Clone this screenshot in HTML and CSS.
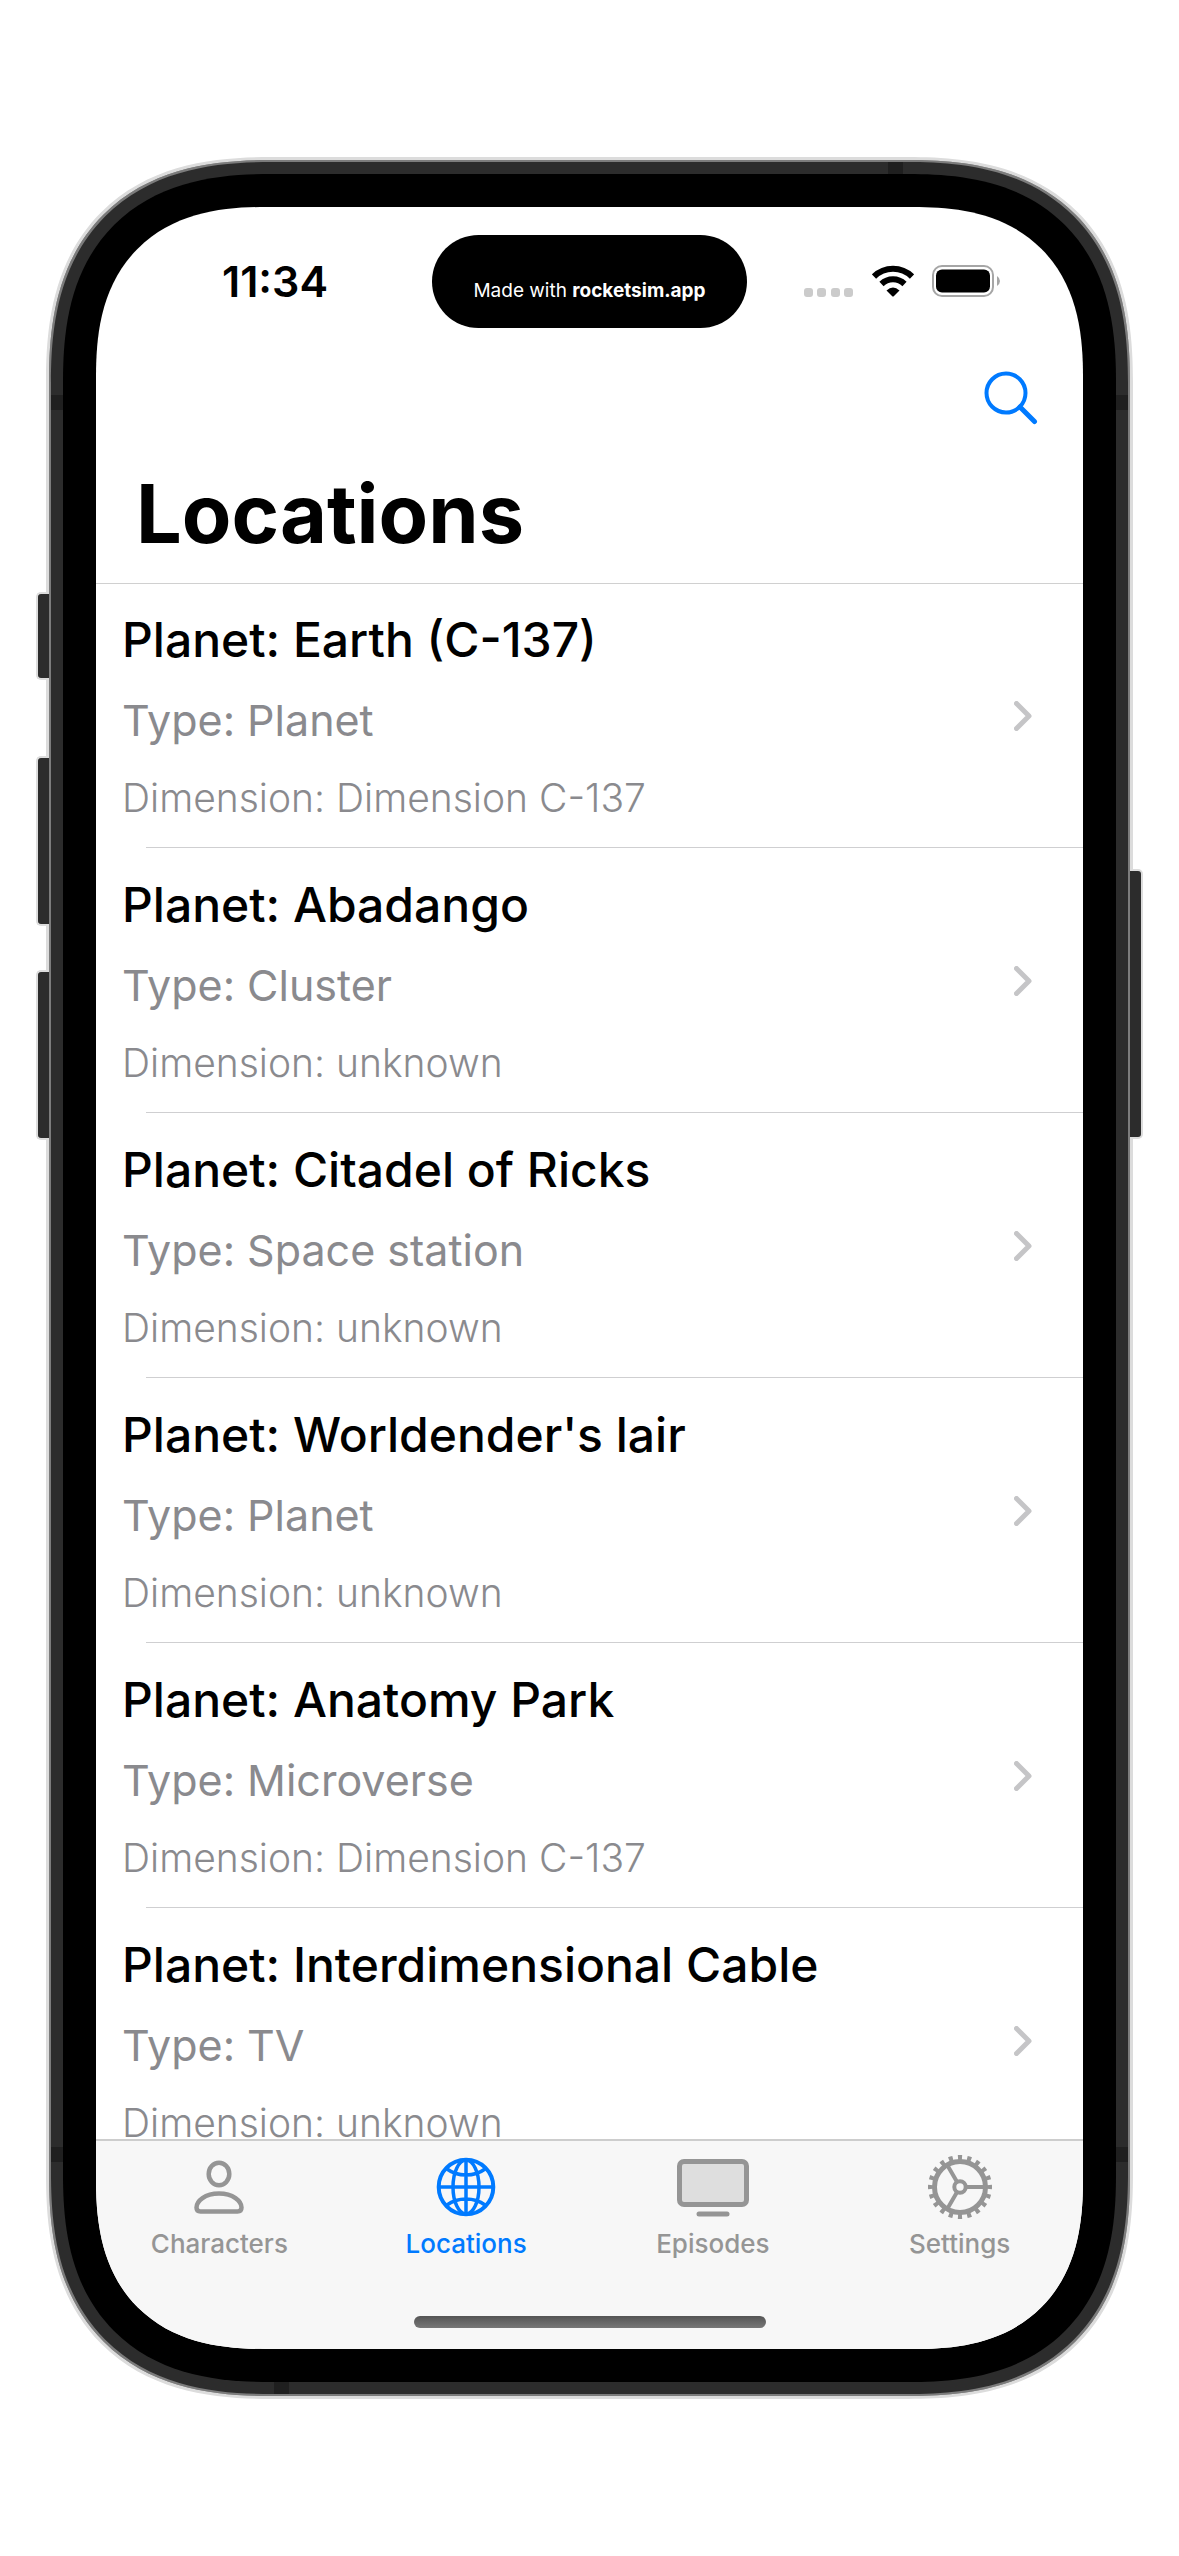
FILE: index.html
```html
<!DOCTYPE html>
<html lang="en">
<head>
<meta charset="utf-8">
<meta name="viewport" content="width=device-width, initial-scale=1">
<title>Locations</title>
<link rel="stylesheet" href="styles.css">
</head>
<body>
<div class="phone">
  <span class="key key-left key-action"></span>
  <span class="key key-left key-volume-up"></span>
  <span class="key key-left key-volume-down"></span>
  <span class="key key-power"></span>
  <span class="antenna antenna-top"></span>
  <span class="antenna antenna-bottom"></span>
  <span class="antenna antenna-side antenna-left-upper"></span>
  <span class="antenna antenna-side antenna-left-lower"></span>
  <span class="antenna antenna-side antenna-right-upper"></span>
  <span class="antenna antenna-side antenna-right-lower"></span>
  <div class="bezel">
    <div class="screen">
      <div class="status">
        <time class="clock">11:34</time>
        <div class="island"><span>Made with <b>rocketsim.app</b></span></div>
        <div class="indicators">
          <svg width="50" height="32" viewBox="0 0 50 32" fill="#cbcbcb" aria-hidden="true">
            <rect x="0" y="23" width="9" height="9" rx="3"/><rect x="13" y="23" width="9" height="9" rx="3"/><rect x="27" y="23" width="9" height="9" rx="3"/><rect x="40" y="23" width="9" height="9" rx="3"/>
          </svg>
          <svg class="wifi" width="42" height="32" viewBox="0 0 42 32" aria-hidden="true">
            <g fill="none" stroke="#000" stroke-width="6">
              <path d="M2 11.500A27 27 0 0 1 40 11.500"/>
              <path d="M9.500 19A16.500 16.500 0 0 1 32.500 19"/>
            </g>
            <path d="M14.500 25.500Q21 19.500 27.500 25.500L22 31Q21 32 20 31Z"/>
          </svg>
          <svg width="69" height="32" viewBox="0 0 69 32" aria-hidden="true">
            <rect x="1" y="1" width="60" height="30" rx="9" fill="none" stroke="#a6a6a6" stroke-width="2"/>
            <rect x="4" y="4.500" width="54" height="23" rx="6"/>
            <path d="M65 11Q68 13 68 16T65 21Z" fill="#a6a6a6"/>
          </svg>
        </div>
      </div>
      <header class="header">
        <button class="search" type="button" aria-label="Search">
          <svg width="54" height="54" viewBox="0 0 54 54" fill="none" stroke="#007aff" stroke-linecap="round" aria-hidden="true">
            <circle cx="22" cy="22" r="19.500" stroke-width="4"/>
            <path d="M36 36L50.500 50.500" stroke-width="5"/>
          </svg>
        </button>
        <h1>Locations</h1>
      </header>
      <main class="list">
        <a class="row" href="#earth"><span class="info"><span class="name">Planet: Earth (C-137)</span><span class="type">Type: Planet</span><span class="dimension">Dimension: Dimension C-137</span></span><svg class="chevron" viewBox="0 0 18 30" aria-hidden="true"><path d="M2.500 2.500L15 15L2.500 27.500"/></svg></a>
        <a class="row" href="#abadango"><span class="info"><span class="name">Planet: Abadango</span><span class="type">Type: Cluster</span><span class="dimension">Dimension: unknown</span></span><svg class="chevron" viewBox="0 0 18 30" aria-hidden="true"><path d="M2.500 2.500L15 15L2.500 27.500"/></svg></a>
        <a class="row" href="#citadel"><span class="info"><span class="name">Planet: Citadel of Ricks</span><span class="type">Type: Space station</span><span class="dimension">Dimension: unknown</span></span><svg class="chevron" viewBox="0 0 18 30" aria-hidden="true"><path d="M2.500 2.500L15 15L2.500 27.500"/></svg></a>
        <a class="row" href="#worldender"><span class="info"><span class="name">Planet: Worldender's lair</span><span class="type">Type: Planet</span><span class="dimension">Dimension: unknown</span></span><svg class="chevron" viewBox="0 0 18 30" aria-hidden="true"><path d="M2.500 2.500L15 15L2.500 27.500"/></svg></a>
        <a class="row" href="#anatomy-park"><span class="info"><span class="name">Planet: Anatomy Park</span><span class="type">Type: Microverse</span><span class="dimension">Dimension: Dimension C-137</span></span><svg class="chevron" viewBox="0 0 18 30" aria-hidden="true"><path d="M2.500 2.500L15 15L2.500 27.500"/></svg></a>
        <a class="row" href="#interdimensional-cable"><span class="info"><span class="name">Planet: Interdimensional Cable</span><span class="type">Type: TV</span><span class="dimension">Dimension: unknown</span></span><svg class="chevron" viewBox="0 0 18 30" aria-hidden="true"><path d="M2.500 2.500L15 15L2.500 27.500"/></svg></a>
      </main>
      <footer class="footer">
        <nav class="tabs">
          <a class="tab" href="#characters">
            <svg width="72" height="64" viewBox="0 0 72 64" fill="none" stroke="currentColor" stroke-width="4.500" aria-hidden="true">
              <ellipse cx="36" cy="19" rx="10.300" ry="11.200"/>
              <path d="M17.500 56.500H54.500Q58.500 56.500 58.500 52.500C58.500 46 50 38.500 36 38.500S13.500 46 13.500 52.500Q13.500 56.500 17.500 56.500Z"/>
            </svg>
            Characters
          </a>
          <a class="tab current" href="#locations" aria-current="page">
            <svg width="72" height="64" viewBox="0 0 72 64" fill="none" stroke="currentColor" stroke-width="3.500" aria-hidden="true">
              <circle cx="36" cy="32" r="27.300" stroke-width="4"/>
              <path d="M36 4V60M8 32H64M17 14Q25 20 36 20T55 14M17 50Q25 44 36 44T55 50"/>
              <ellipse cx="36" cy="32" rx="13" ry="27"/>
            </svg>
            Locations
          </a>
          <a class="tab" href="#episodes">
            <svg width="72" height="64" viewBox="0 0 72 64" stroke="currentColor" aria-hidden="true">
              <rect x="2.500" y="6.500" width="67" height="43" rx="4.500" fill="#dedede" stroke-width="5"/>
              <path d="M22 59H50" stroke-width="5" stroke-linecap="round"/>
            </svg>
            Episodes
          </a>
          <a class="tab" href="#settings">
            <svg width="72" height="64" viewBox="0 0 72 64" fill="none" stroke="currentColor" aria-hidden="true">
              <circle cx="36" cy="32" r="25.500" stroke-width="5"/>
              <circle cx="36" cy="32" r="29.500" stroke-width="5" pathLength="180" stroke-dasharray="4 5" stroke-dashoffset="2"/>
              <circle cx="36" cy="32" r="5.700" stroke-width="4"/>
              <path d="M43 32H61M32.500 38L23.500 53.500M32.500 26L23.500 10.500" stroke-width="4"/>
            </svg>
            Settings
          </a>
        </nav>
        <div class="home-indicator"></div>
      </footer>
    </div>
  </div>
</div>
</body>
</html>
```
FILE: styles.css
```css
* { box-sizing: border-box; }

body {
  margin: 0;
  height: 100vh;
  padding: 157px 46px;
  display: flex;
  background: #fff;
  font-family: Inter, "Liberation Sans", sans-serif;
}

.phone {
  position: relative;
  flex: 1;
  display: flex;
  min-width: 0;
  padding: 14px;
  border: 3px solid #dcdcdc;
  border-radius: 188px;
  background: #2c2c2c;
  box-shadow: inset 0 0 0 2px #7c7c7c;
}

.bezel {
  flex: 1;
  display: flex;
  min-width: 0;
  padding: 33px;
  border-radius: 171px;
  background: #000;
}

.screen {
  flex: 1;
  display: flex;
  flex-direction: column;
  min-width: 0;
  border-radius: 138px;
  background: #fff;
  overflow: hidden;
}

/* Continuous corners where the browser can draw them */
@supports (corner-shape: superellipse(1.3)) {
  .phone, .bezel, .screen { corner-shape: superellipse(1.3); }
  .phone { border-radius: 225px; }
  .bezel { border-radius: 208px; }
  .screen { border-radius: 170px; }
}

/* Hardware keys and antenna bands sit over the frame edge */
.key {
  position: absolute;
  width: 13px;
  border: 2px solid #dcdcdc;
  background: #2c2c2c;
}
.key-left { left: -13px; border-right: 0; border-radius: 5px 0 0 5px; }
.key-action { top: 432px; height: 88px; }
.key-volume-up { top: 596px; height: 170px; }
.key-volume-down { top: 810px; height: 170px; }
.key-power { right: -13px; top: 709px; height: 270px; border-left: 0; border-radius: 0 5px 5px 0; }

.antenna { position: absolute; width: 15px; height: 12px; background: #1f1f1f; }
.antenna-side { width: 12px; height: 15px; }
.antenna-top { top: 2px; right: 227px; }
.antenna-bottom { bottom: 2px; left: 225px; }
.antenna-left-upper { left: 2px; top: 235px; }
.antenna-left-lower { left: 2px; bottom: 234px; }
.antenna-right-upper { right: 2px; top: 235px; }
.antenna-right-lower { right: 2px; bottom: 234px; }

.status {
  display: grid;
  grid-template-columns: 1fr auto 1fr;
  align-items: center;
  height: 148px;
}
.clock { justify-self: center; padding-left: 22px; font-size: 43px; line-height: 50px; font-weight: 600; }
.island {
  display: flex;
  align-items: center;
  justify-content: center;
  width: 315px;
  height: 93px;
  padding-top: 18px;
  border-radius: 47px;
  background: #000;
  color: #fff;
  font-size: 19px;
}
.indicators { display: flex; gap: 18px; padding-left: 57px; }

.header { display: flex; flex-direction: column; padding: 14px 40px 19px; border-bottom: 1px solid #d0d0d0; }
.search { align-self: flex-end; display: flex; margin: 0; padding: 2px 5px; border: 0; background: none; }
h1 { margin: 37px 0 0; font-size: 81px; line-height: 100px; font-weight: 700; }

.list { flex: 1 1 0; min-height: 0; overflow: hidden; }
.row {
  position: relative;
  display: flex;
  align-items: center;
  justify-content: space-between;
  height: 265px;
  padding: 0 51px 2px 26px;
  color: #8a8a8e;
  text-decoration: none;
}
.row::after { content: ""; position: absolute; right: 0; bottom: 1px; left: 50px; height: 1px; background: #cfcfd1; }
.info { display: flex; flex-direction: column; gap: 20px; padding-top: 4px; }
.name { color: #000; font-size: 48px; line-height: 60px; font-weight: 500; }
.type { font-size: 43px; line-height: 60px; }
.dimension { font-size: 39px; line-height: 56px; font-weight: 300; }
.chevron { flex: none; width: 18px; height: 30px; fill: none; stroke: #c5c5c7; stroke-width: 5; stroke-linecap: round; stroke-linejoin: round; }

.footer { border-top: 2px solid #cdcdcd; background: #f7f7f7; }
.tabs { display: grid; grid-template-columns: repeat(4, 1fr); }
.tab {
  display: flex;
  flex-direction: column;
  align-items: center;
  gap: 10px;
  padding-top: 14px;
  color: #959595;
  font-size: 26px;
  line-height: 30px;
  font-weight: 500;
  text-decoration: none;
}
.current { color: #007aff; }
.home-indicator { width: 352px; height: 12px; margin: 57px auto 21px; border-radius: 6px; background: linear-gradient(#555, #777); }
```
